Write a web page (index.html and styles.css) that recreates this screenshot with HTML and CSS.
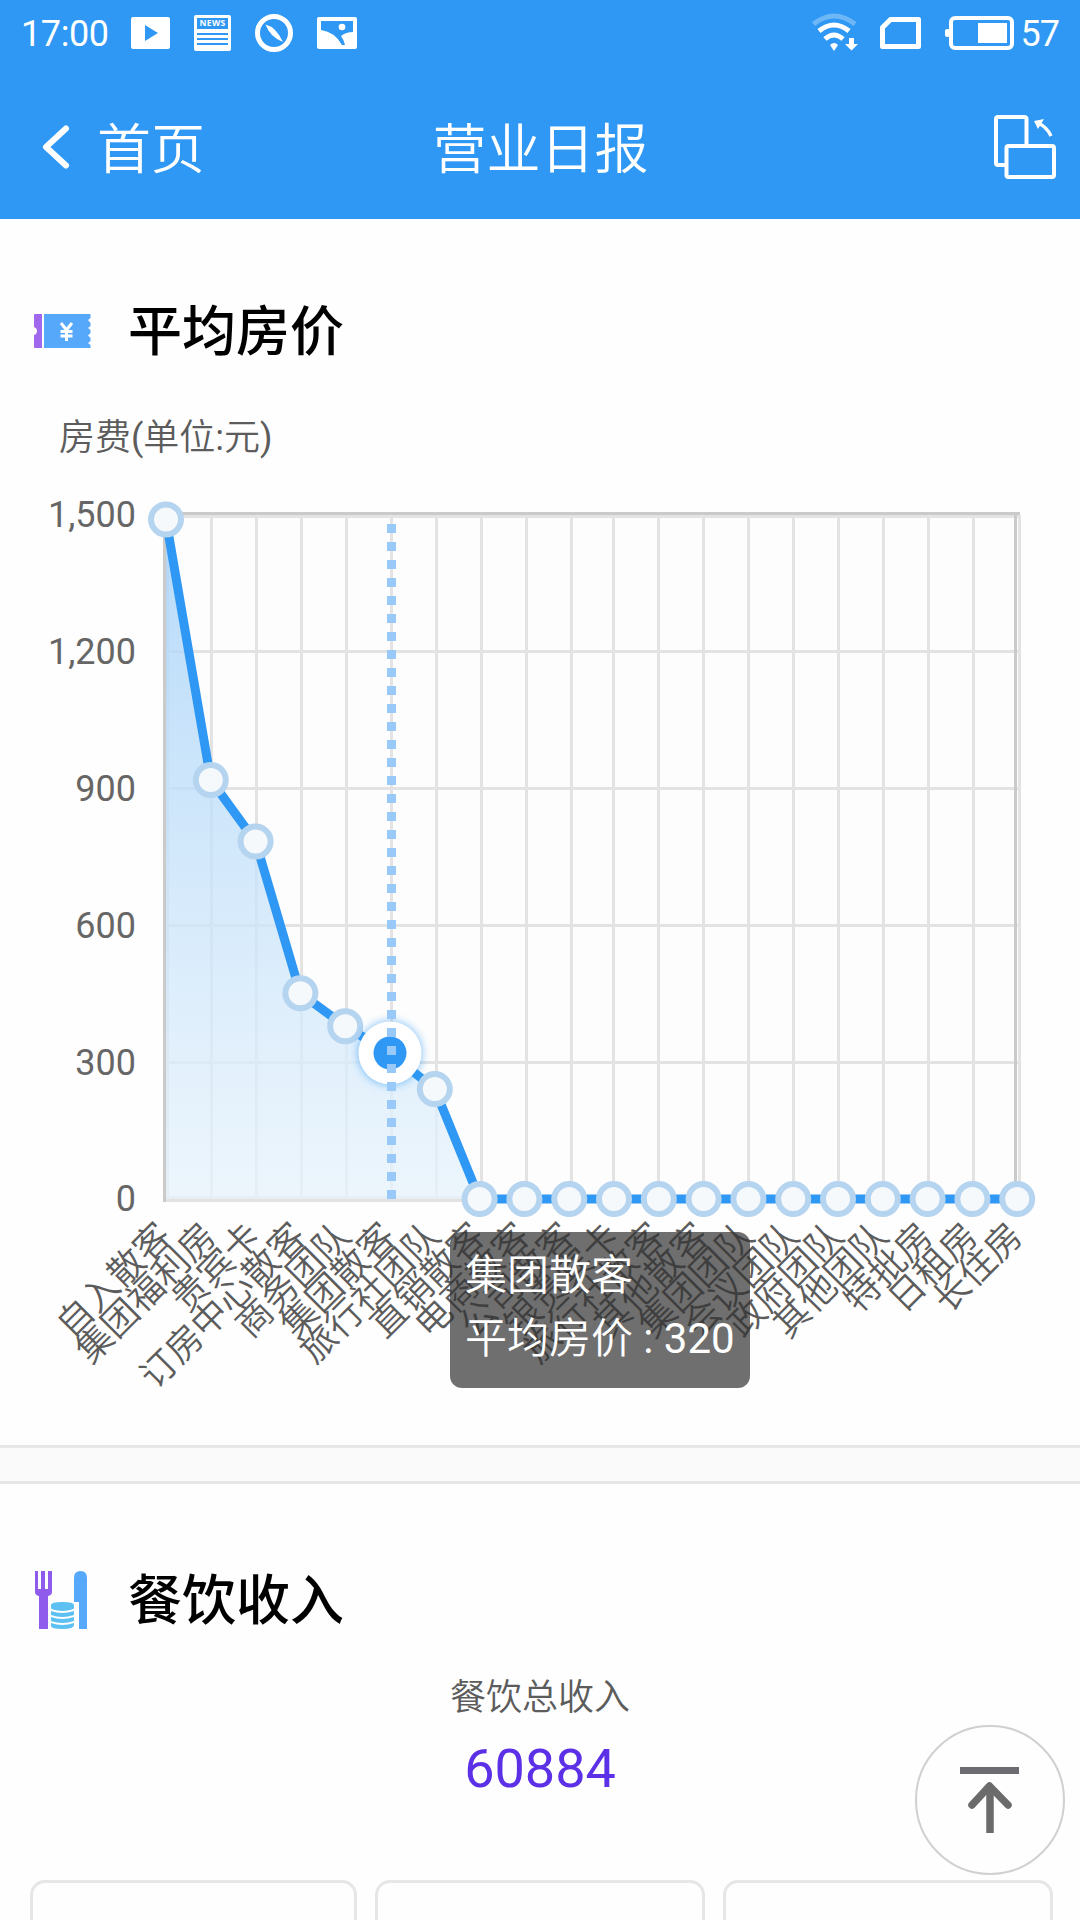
FILE: index.html
```html
<!DOCTYPE html>
<html lang="zh-CN">
<head>
	<meta charset="utf-8">
	<title>营业日报</title>
	<link rel="stylesheet" href="styles.css">
</head>
<body>
<header class="top">
	<div class="status">
		<span class="time">17:00</span>
		<svg class="st-play" width="39" height="32" viewBox="0 0 39 32"><path fill="#fff" fill-rule="evenodd" d="M2 0H37Q39 0 39 2V30Q39 32 37 32H2Q0 32 0 30V2Q0 0 2 0ZM14 8V24L27 16Z"/></svg>
		<svg class="st-news" width="37" height="36" viewBox="0 0 37 36"><rect width="37" height="36" rx="2" fill="#fff"/><path fill="#2f98f4" d="M3 3h31v11H3zM3 18h31v2H3zM3 23h31v2H3zM3 28h31v2H3z"/><text x="18.5" y="11" class="news-txt">NEWS</text></svg>
		<svg class="st-compass" width="38" height="38" viewBox="0 0 38 38"><circle cx="19" cy="19" r="16.5" fill="none" stroke="#fff" stroke-width="5"/><path fill="#fff" d="M10.500 10.500Q21 13 28 28Q15 23 10.500 10.500Z"/></svg>
		<svg class="st-pic" width="40" height="32" viewBox="0 0 40 32"><rect width="40" height="32" rx="2" fill="#fff"/><path fill="#2f98f4" d="M4 4H36V15Q29 15 24 19Q27 23 28 28H25Q18 15 4 13Z"/><circle cx="25" cy="10" r="3.3" fill="#fff"/></svg>
		<div class="status-right">
			<svg width="46" height="40" viewBox="0 0 46 40"><g fill="none" stroke="#fff" stroke-width="5"><path d="M1.500 11Q22 -5 43 11" stroke-opacity=".3"/><path d="M7 18Q22 6 37 18"/><path d="M13 26Q22 18 31 26"/></g><path fill="#fff" d="M18 32Q22 28 26 32L22 38ZM37 25h5v6h4l-6.500 6.500L33 31h4z"/></svg>
			<svg class="st-sim" width="41" height="32" viewBox="0 0 41 32"><path fill="none" stroke="#fff" stroke-width="5" d="M10.500 2.500H38.500V29.500H2.500V10.500Z" stroke-linejoin="round"/></svg>
			<svg class="st-batt" width="70" height="34" viewBox="0 0 70 34"><rect y="13" width="5" height="8" rx="2" fill="#fff"/><rect x="6" y="2" width="61" height="30" rx="4" fill="none" stroke="#fff" stroke-width="4"/><path fill="#fff" d="M33 7h29v20H33z"/></svg>
			<span class="pct">57</span>
		</div>
	</div>
	<div class="nav">
		<a class="back">
			<svg width="28" height="44" viewBox="0 0 28 44"><path d="M24 3.500L4 22L24 40.500" fill="none" stroke="#fff" stroke-width="6" stroke-linecap="round" stroke-linejoin="round"/></svg>
			<span>首页</span>
		</a>
		<h1>营业日报</h1>
		<svg class="rotate" width="62" height="64" viewBox="0 0 62 64"><g fill="none" stroke="#fff" stroke-width="4"><path d="M11 50H4Q2 50 2 48V4Q2 2 4 2H30Q32.500 2 32.500 4V30"/><rect x="12.500" y="31" width="47.500" height="31" rx="2"/><path d="M44 8Q53 12 57 21" stroke-width="3.500"/></g><path fill="#fff" d="M40 6L50 4L44 14Z"/></svg>
	</div>
</header>

<section class="card">
	<div class="title">
		<svg width="60" height="60" viewBox="0 0 60 60"><path fill="#a068ec" d="M4 13H11V47H4Q3 47 3 46V34Q6 33 6 30Q6 27 3 26V14Q3 13 4 13Z"/><path fill="#56a8fb" d="M13 13H59.500V17L57 19L59.500 22V25L57 27L59.500 29V32L57 34.500L59.500 37V40L57 42L59.500 44V47H13Z"/><path d="M30 22L35.500 29L41 22M35.500 29V40M29.500 30.500H41.500M29.500 35H41.500" fill="none" stroke="#fff" stroke-width="3"/></svg>
		<h2>平均房价</h2>
	</div>
	<div class="chart">
		<svg id="chart" width="1080" height="1040" viewBox="0 380 1080 1040">
			<defs>
				<linearGradient id="area" x1="0" y1="0" x2="0" y2="1">
					<stop offset="0" stop-color="#a6d2f9" stop-opacity=".8"/>
					<stop offset="1" stop-color="#e7f3fc" stop-opacity=".75"/>
				</linearGradient>
				<filter id="glow" x="-50%" y="-50%" width="200%" height="200%"><feGaussianBlur stdDeviation="4"/></filter>
			</defs>
			<text class="name" x="59" y="449.5">房费<tspan>(</tspan>单位<tspan>:</tspan>元<tspan>)</tspan></text>
			<rect x="165" y="515" width="853" height="684" fill="#fdfdfd"/>
			<g id="grid"></g>
			<g id="line"></g>
			<g id="labels"></g>
		</svg>
		<div class="tooltip">集团散客<br>平均房价 <span>: 320</span></div>
	</div>
</section>

<section class="card food">
	<div class="title">
		<svg width="60" height="62" viewBox="0 0 60 62"><path fill="#8f5bec" d="M4 2H7V20H10V2H14V20H17V2H21V23Q21 26 17 27V60H8V27Q4 26 4 23Z"/><path fill="#56a8fb" d="M43 33V9Q43 2 49.500 2Q56 2 56 9V60H48V33Z"/><path fill="#5cc0f2" d="M20 36Q20 33 31.500 33Q43 33 43 36V39Q43 41 31.500 42Q20 41 20 39ZM20 42Q31 46 43 42V46Q31 50 20 46ZM20 48Q31 52 43 48V52Q31 56 20 52ZM20 54Q31 58 43 54V56Q43 60 31.500 60Q20 60 20 57Z"/></svg>
		<h2>餐饮收入</h2>
	</div>
	<div class="total">
		<p>餐饮总收入</p>
		<strong>60884</strong>
	</div>
	<div class="boxes">
		<div></div>
		<div></div>
		<div></div>
	</div>
</section>

<a class="gotop">
	<svg width="60" height="68" viewBox="0 0 60 68"><path fill="#6c6c72" d="M0 1h59v7H0z"/><path d="M30 67V22" stroke="#6b6b6b" stroke-width="7.500"/><path d="M12 39L29.500 20L48 39" fill="none" stroke="#6b6b6b" stroke-width="7.500" stroke-linecap="round" stroke-linejoin="round"/></svg>
</a>
<script src="chart.js"></script>
</body>
</html>
```
FILE: styles.css
```css
html,body{height:100%;overflow:hidden;}
body,h1,h2,p{margin:0;padding:0;}
body{background:#fefefe;font-family:Roboto,"Noto Sans CJK SC",sans-serif;color:#000;}
svg{display:block;flex:none;}

/* 顶部 */
.top{height:219px;background:#2f98f4;color:#fff;}
.status{display:flex;align-items:center;height:66px;padding:0 21px 0 21px;font-size:36px;}
.time{width:110px;letter-spacing:-.4px;padding-top:1px;}
.st-news{margin-left:24px;}
.st-compass{margin-left:24px;}
.st-pic{margin-left:24px;}
.news-txt{font:bold 8.500px "Open Sans",sans-serif;fill:#fff;text-anchor:middle;letter-spacing:.3px;}
.status-right{display:flex;align-items:center;margin-left:auto;}
.st-sim{margin-left:22px;}
.st-batt{margin:0 6px 0 24px;}
.pct{letter-spacing:-1px;padding-top:1px;}
.nav{display:grid;grid-template-columns:1fr auto 1fr;align-items:center;height:162px;box-sizing:border-box;padding:0 24px 0 42px;font-size:54px;font-weight:350;}
.nav h1{font-size:54px;font-weight:350;margin-left:-17px;}
.nav>*{height:80px;line-height:80px;margin-top:8px;}
.back{display:flex;align-items:center;gap:27px;}
.back svg{margin-top:-9px;}
.nav .rotate{height:64px;justify-self:end;margin-top:0;}

/* 板块 */
.card{box-sizing:border-box;}
.title{display:flex;align-items:center;gap:37px;padding:71px 31px 0;height:80px;}
.title h2{font-size:54px;line-height:80px;font-weight:500;padding-top:6px;}
.title svg{margin-top:1px;}
.chart{position:relative;height:1075px;padding-bottom:26px;}
#chart{margin-top:10px;}
#chart text{font-size:36px;font-weight:350;fill:#5c5c5c;}
#chart tspan{font-weight:400;}
#chart .lbl{text-anchor:end;dominant-baseline:central;}
#chart .y{text-anchor:end;font-weight:400;fill:#666;}
.tooltip{position:absolute;left:450px;top:852px;width:300px;height:156px;box-sizing:border-box;padding:12px 15px;border-radius:12px;background:rgba(50,50,50,.7);color:#fff;font-size:42px;line-height:63px;font-weight:350;white-space:nowrap;}
.tooltip span{font-weight:400;}

.food{border-top:3px solid #e6e6e6;}
.food .title{padding-top:73px;}
.food .title svg{margin-top:5px;}
.food .title h2{padding-top:9px;}
.card+.food{box-shadow:0 -33px 0 #fafafa,0 -36px 0 #e6e6e6;}
.total{text-align:center;}
.total p{font-size:36px;line-height:54px;font-weight:350;color:#5c5c5c;padding-top:34px;}
.total strong{display:block;font-size:54px;line-height:64px;font-weight:400;color:#5b30e6;padding-top:12px;}
.boxes{display:grid;grid-template-columns:327px 330px 330px;gap:18px;padding:79px 27px 0 30px;}
.boxes div{height:40px;border:3px solid #e6e6e6;border-bottom:0;border-radius:15px 15px 0 0;box-sizing:border-box;}

.gotop{position:fixed;left:915px;top:1725px;width:150px;height:150px;box-sizing:border-box;border:2px solid #d0d0d0;border-radius:50%;background:#fefefe;display:flex;align-items:center;justify-content:center;}
```
FILE: chart.js
```js
var names=['自入散客','集团福利房','贵宾卡','订房中心散客','商务团队','集团散客','旅行社团队','直销散客','电商散客','公司散客','银贵宾卡','旅行社散客','其他散客','集团团队','会议团队','政府团队','其他团队','特批房','日租房','长住房'];
var data=[1490,919,784,451,379,320,241,0,0,0,0,0,0,0,0,0,0,0,0,0];
var i,x,y,pts=[],grid='',dots='',labels='';

//网格
for(i=1;i<19;i++){
	x=i<10?166.5+45*i:613.5+45*(i-10);
	grid+='<path d="M'+x+' 515V1199" stroke="#e3e3e3" stroke-width="3"/>';
}
for(i=0;i<6;i++){
	y=[515,651.5,788.5,925.5,1062.5,1199][i];
	if(i>0&&i<5) grid+='<path d="M165 '+y+'H1018" stroke="#e3e3e3" stroke-width="3"/>';
	grid+='<text class="y" x="136" y="'+(y+12)+'">'+['1,500','1,200','900','600','300','0'][i]+'</text>';
}
grid+='<path d="M166 1199H1021" stroke="#e3e3e3" stroke-width="6"/>'+
	'<path d="M166 516.5H1019.500V1199" fill="none" stroke="#e3e3e3" stroke-width="3"/>'+
	'<path d="M167.500 515V1202" stroke="#e3e3e3" stroke-width="3"/>'+
	'<path d="M164.500 512V1202M1015.500 515V1199" stroke="#cacaca" stroke-width="3"/>'+
	'<path d="M163 513.5H1020" stroke="#cacaca" stroke-width="3"/>';
document.getElementById('grid').innerHTML=grid;

//折线
for(i=0;i<20;i++){
	x=166+44.8*i;
	y=1199-data[i]/1500*684;
	pts.push(x+' '+y);
	if(i!=5) dots+='<circle cx="'+x+'" cy="'+y+'" r="15" fill="#f6f9fb" stroke="#b5d4f0" stroke-width="6"/>';
	labels+='<text class="lbl" transform="translate('+(x-1)+' 1229.5) rotate(-45)">'+names[i]+'</text>';
}
document.getElementById('line').innerHTML=
	'<path d="M'+pts.slice(0,8).join('L')+'L166 1199Z" fill="url(#area)"/>'+
	'<path d="M'+pts.join('L')+'" fill="none" stroke="#2f98f4" stroke-width="9"/>'+dots+
	'<circle cx="390" cy="1053" r="32" fill="#2f98f4" opacity=".6" filter="url(#glow)"/>'+
	'<circle cx="390" cy="1053" r="31.500" fill="#fff"/><circle cx="390" cy="1053" r="16.500" fill="#2f98f4"/>'+
	'<path d="M391.500 524V1199" stroke="#98c9f9" stroke-width="9" stroke-dasharray="9 9"/>';
document.getElementById('labels').innerHTML=labels;
```
